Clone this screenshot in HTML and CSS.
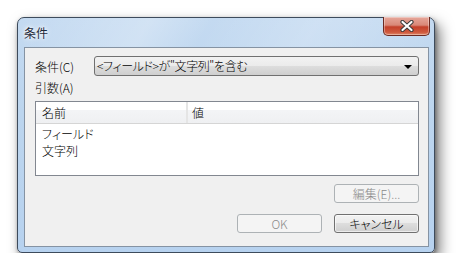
FILE: index.html
```html
<!DOCTYPE html>
<html lang="ja">
<head>
    <meta charset="UTF-8">
    <title>条件</title>
    <link rel="stylesheet" href="styles.css">
</head>
<body>
    <div class="window">
        <div class="titlebar">
            <span class="title">条件</span>
            <div class="close">
                <svg width="20" height="12" viewBox="0 0 20 12">
                    <path d="M5.5 2 L14.5 10 M14.5 2 L5.5 10" stroke="#3b3b3b" stroke-width="4.2" stroke-linecap="round"/>
                    <path d="M5.5 2 L14.5 10 M14.5 2 L5.5 10" stroke="#ffffff" stroke-width="2.2" stroke-linecap="round"/>
                </svg>
            </div>
        </div>
        <div class="client">
            <div class="row">
                <span class="label">条件(C)</span>
                <div class="combo">
                    <span class="combo-text">&lt;フィールド&gt;が"文字列"を含む</span>
                    <span class="arrow"></span>
                </div>
            </div>
            <div class="caption">引数(A)</div>
            <div class="list">
                <div class="list-head">
                    <div class="col name">名前</div>
                    <div class="col value">値</div>
                </div>
                <div class="list-row">フィールド</div>
                <div class="list-row">文字列</div>
            </div>
            <div class="edit-row">
                <button class="btn" disabled>編集(E)...</button>
            </div>
            <div class="buttons">
                <button class="btn" disabled>OK</button>
                <button class="btn active">キャンセル</button>
            </div>
        </div>
    </div>
</body>
</html>
```

FILE: styles.css
```css
body {
    margin: 0;
    background: #ffffff;
    font-family: "Noto Sans CJK JP", "DejaVu Sans", sans-serif;
    font-size: 12px;
    font-weight: 300;
    font-feature-settings: "palt";
    color: #000;
}

.window {
    margin: 17px 0 0 17px;
    width: 405px;
    height: 229px;
    border: 1px solid #3d4b5c;
    border-radius: 7px 7px 5px 5px;
    padding: 0 5px 5px 6px;
    background: linear-gradient(180deg, #c4daf1 0%, #bcd5ee 40%, #b7d2ef 100%);
    box-shadow: 5px 7px 14px rgba(0, 0, 0, 0.5), 1px 2px 4px rgba(0, 0, 0, 0.35);
    display: flex;
    flex-direction: column;
}

.titlebar {
    height: 29px;
    display: flex;
    justify-content: space-between;
    align-items: flex-start;
    background: linear-gradient(120deg, rgba(255,255,255,0) 0%, rgba(255,255,255,0.25) 30%, rgba(255,255,255,0) 45%, rgba(255,255,255,0.2) 70%, rgba(255,255,255,0) 100%);
}

.title {
    margin-top: 7px;
    line-height: 16px;
    color: #1e2a3a;
    font-weight: 400;
    text-shadow: 0 0 6px #ffffff, 0 0 3px #ffffff;
}

.close {
    margin-top: -1px;
    margin-right: -1px;
    width: 45px;
    height: 18px;
    border: 1px solid #6b2a22;
    border-top: none;
    border-radius: 0 0 5px 5px;
    background: linear-gradient(180deg, #e6a79b 0%, #d98878 45%, #c4402b 55%, #cf5a3e 85%, #e08a6b 100%);
    box-shadow: inset 0 0 0 1px rgba(255, 255, 255, 0.35);
    display: flex;
    align-items: center;
    justify-content: center;
}

.client {
    flex: 1;
    border: 1px solid #8593a3;
    background: #f0f0f0;
    padding: 8px 9px 0 10px;
    display: flex;
    flex-direction: column;
}

.row {
    display: flex;
    align-items: center;
    height: 20px;
}

.label {
    width: 59px;
}

.combo {
    flex: 1;
    height: 18px;
    border: 1px solid #707070;
    border-radius: 3px;
    background: linear-gradient(180deg, #f2f2f2 0%, #ebebeb 50%, #dddddd 50%, #cfcfcf 100%);
    display: flex;
    align-items: center;
    justify-content: space-between;
    padding: 0 6px 0 2px;
    line-height: 16px;
}

.combo-text {
    letter-spacing: -0.4px;
}

.arrow {
    width: 0;
    height: 0;
    border-left: 4px solid transparent;
    border-right: 4px solid transparent;
    border-top: 4px solid #000;
    margin-top: 1px;
}

.caption {
    margin-top: 4px;
    line-height: 16px;
    height: 17px;
}

.list {
    height: 73px;
    border: 1px solid #828790;
    background: #ffffff;
    margin-top: 4px;
}

.list-head {
    display: flex;
    height: 21px;
    border-bottom: 1px solid #d5d5d5;
    background: linear-gradient(180deg, #ffffff 0%, #ffffff 40%, #f3f4f6 40%, #eff0f2 100%);
}

.col {
    line-height: 21px;
    padding-left: 6px;
}

.name {
    width: 144px;
    border-right: 2px solid #e5e5e5;
}

.value {
    flex: 1;
    padding-left: 4px;
}

.list-row {
    padding-left: 6px;
    line-height: 17px;
}

.list-head + .list-row {
    margin-top: 1px;
}

.edit-row {
    display: flex;
    justify-content: flex-end;
    margin-top: 8px;
}

.buttons {
    display: flex;
    justify-content: flex-end;
    gap: 12px;
    margin-top: 11px;
}

.btn {
    width: 85px;
    height: 19px;
    padding: 0;
    font-family: inherit;
    font-size: 12px;
    font-weight: 300;
    font-feature-settings: "palt";
    line-height: 16px;
    border-radius: 3px;
    border: 1px solid #adb2b5;
    background: #f4f4f4;
    color: #8a8a8a;
}

.btn.active {
    border-color: #707070;
    color: #000;
    background: linear-gradient(180deg, #f2f2f2 0%, #ebebeb 50%, #dddddd 50%, #cfcfcf 100%);
    box-shadow: inset 0 0 0 1px rgba(255, 255, 255, 0.6);
}
```
